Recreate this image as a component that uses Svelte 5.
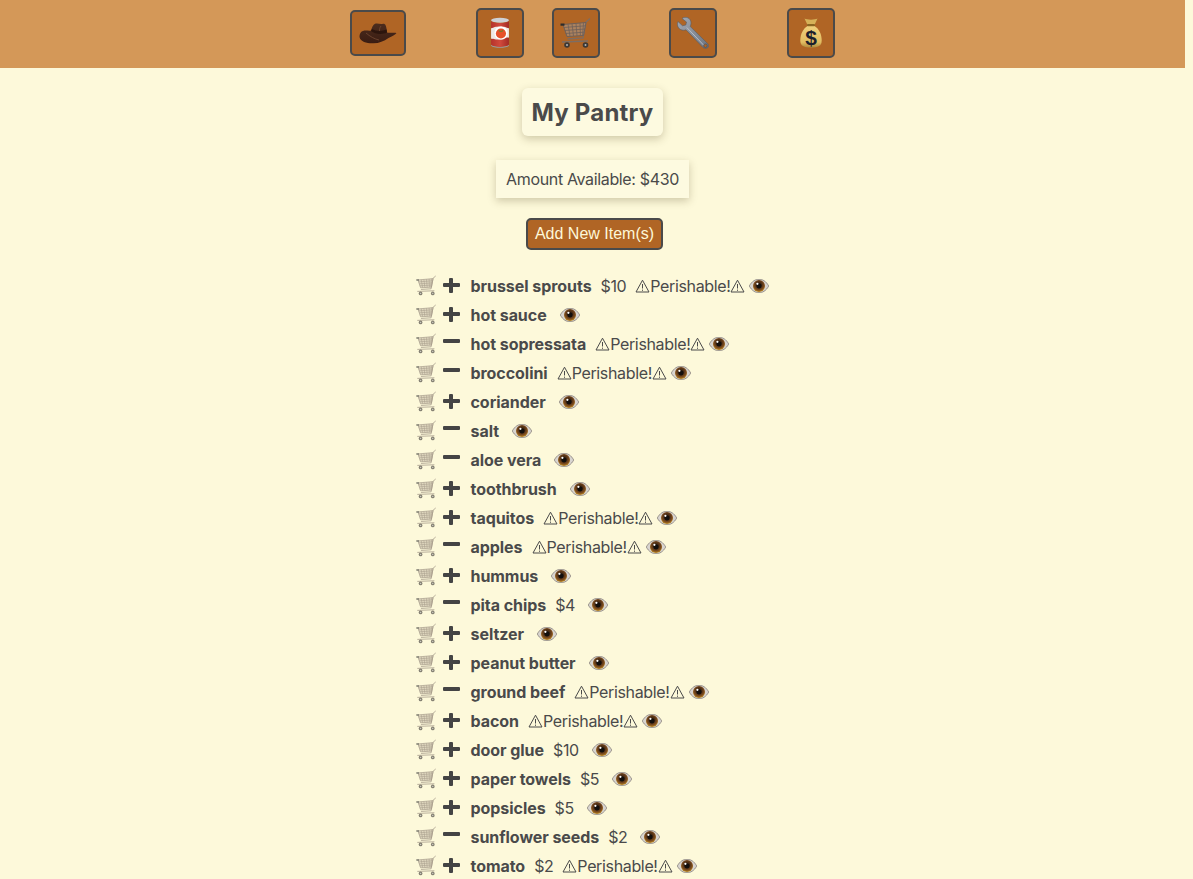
<script>
  const navItems = [
    { icon: 'hat', label: 'Profile', wide: true },
    { icon: 'can', label: 'Pantry' },
    { icon: 'cart', label: 'Shopping list' },
    { icon: 'wrench', label: 'Tools' },
    { icon: 'bag', label: 'Budget' }
  ];

  // inCart drives the plus / minus toggle
  const items = [
    { name: 'brussel sprouts', price: 10, perishable: true },
    { name: 'hot sauce' },
    { name: 'hot sopressata', inCart: true, perishable: true },
    { name: 'broccolini', inCart: true, perishable: true },
    { name: 'coriander' },
    { name: 'salt', inCart: true },
    { name: 'aloe vera', inCart: true },
    { name: 'toothbrush' },
    { name: 'taquitos', perishable: true },
    { name: 'apples', inCart: true, perishable: true },
    { name: 'hummus' },
    { name: 'pita chips', inCart: true, price: 4 },
    { name: 'seltzer' },
    { name: 'peanut butter' },
    { name: 'ground beef', inCart: true, perishable: true },
    { name: 'bacon', perishable: true },
    { name: 'door glue', price: 10 },
    { name: 'paper towels', price: 5 },
    { name: 'popsicles', price: 5 },
    { name: 'sunflower seeds', inCart: true, price: 2 },
    { name: 'tomato', price: 2, perishable: true }
  ];
</script>

{#snippet cartIcon()}
  <svg viewBox="0 0 32 32" class="icon-svg" aria-hidden="true">
    <path d="M30 1.500 L26 5 L23 21 L7.500 22" fill="none" stroke="#7c6d64" stroke-width="1.300" />
    <path d="M3 7.500 L26 5.500 L23.500 18.500 L7 19.500 Z" fill="#a99a8e" fill-opacity="0.55" stroke="#6f6058" stroke-width="1" />
    <path d="M3.800 10.500 L25.400 8.800 M4.700 13.500 L24.800 12 M5.600 16.500 L24.200 15.200 M8 7.200 L10 19.200 M12 6.800 L13.500 19 M16 6.500 L17 18.800 M20 6.100 L20.400 18.600 M23.500 5.800 L22.600 18.500" fill="none" stroke="#6f6058" stroke-width="0.800" />
    <path d="M2 25 L28 24" fill="none" stroke="#7c6d64" stroke-width="1.300" />
    <rect x="0.500" y="6.500" width="4" height="2.200" fill="#2c2c2c" />
    <circle cx="7" cy="28" r="2.800" fill="#3c3835" /><circle cx="7" cy="28" r="1" fill="#b5b5b5" />
    <circle cx="25.500" cy="28" r="2.800" fill="#3c3835" /><circle cx="25.500" cy="28" r="1" fill="#b5b5b5" />
  </svg>
{/snippet}

{#snippet hatIcon()}
  <svg viewBox="0 0 38 21" class="hat" aria-hidden="true">
    <path d="M0.500 14 C0.500 9.500 3 7.500 6.500 7.500 C9 7.500 10.500 8 12 7.500 C13 4.500 14 1.500 16 0.800 C19 0 21 1.500 24 0.800 C26.500 0.500 27 3 27.500 5.500 L28 9.500 C31 10.500 34.500 9 37.500 10 C36.500 12 33 13 29.500 15 C24.500 18.500 19 20.800 13 20.300 C7.500 20 1.500 19 0.500 14 Z" fill="url(#hat-felt)" />
    <path d="M12 8 C16 11 23 12 28 9.500 L27.600 6.500 C23 8.500 17 8.500 13 6 Z" fill="#2c150d" />
    <path d="M7 10 C11 13.500 15.500 16 20 17 M22 3 C20.500 5 20.500 6.500 20.500 8" fill="none" stroke="#734a33" stroke-width="0.800" />
  </svg>
{/snippet}

{#snippet canIcon()}
  <svg viewBox="0 0 24 34" class="icon-svg" aria-hidden="true">
    <ellipse cx="12" cy="3.500" rx="9.500" ry="2.600" fill="#ced1d5" />
    <path d="M2.500 4.500 C5 7 19 7 21.500 4.500 L21.500 29.500 C19 32.500 5 32.500 2.500 29.500 Z" fill="url(#can-red)" />
    <path d="M2.500 12 C6 11 7 10 12 10 C17 10 18 11 21.500 12 L21.500 22 C18 21 17 24 12 24 C7 24 6 23 2.500 23 Z" fill="#eeeae4" />
    <circle cx="13" cy="17" r="7" fill="#fff" />
    <circle cx="13" cy="17.500" r="5.400" fill="#e6522a" />
    <path d="M10 13.500 L13 14.800 L16 13.500 L14.500 15.800 L11.500 15.800 Z" fill="#5d8a2f" />
    <path d="M2.500 29.500 C5 32.500 19 32.500 21.500 29.500 L21.500 30.500 C19 33.500 5 33.500 2.500 30.500 Z" fill="#9a9ca0" />
  </svg>
{/snippet}

{#snippet wrenchIcon()}
  <svg viewBox="0 0 32 32" class="icon-svg" aria-hidden="true">
    <path d="M11 0.800 C8.500 0 6.500 0.300 5 1.500 L9.500 5 L8.800 8 L5.500 8.800 L1 4.500 C-0.500 7.500 0.800 11 3.500 12.500 C5.500 13.500 7.500 13.500 9 12.800 L26 30.500 C28 32 31 31.500 31.500 29.500 C32 28 31 27 30 26 L13.200 9.500 C14.800 6 14 2.500 11 0.800 Z" fill="url(#steel)" stroke="#565c66" stroke-width="0.600" />
    <path d="M9.800 10.500 L27 28.500" stroke="#b9bec6" stroke-width="1" fill="none" />
    <circle cx="28.500" cy="28.700" r="1.800" fill="#b06525" stroke="#4f545d" stroke-width="0.800" />
  </svg>
{/snippet}

{#snippet bagIcon()}
  <svg viewBox="0 0 22 30" class="bag" aria-hidden="true">
    <path d="M4.500 0.500 C7 2 15 2 17.500 0.500 L14.500 7 L7.500 7 Z" fill="#d6b158" />
    <path d="M7.500 8 C3 11 0.300 16 0.300 22.500 C0.300 28 4 29.500 11 29.500 C18 29.500 21.700 28 21.700 22.500 C21.700 16 19 11 14.500 8 Z" fill="url(#bag-cloth)" />
    <rect x="7" y="6" width="8" height="2.300" rx="1" fill="#8a6622" />
    <text x="11" y="26.500" text-anchor="middle" class="dollar">$</text>
  </svg>
{/snippet}

{#snippet eyeIcon()}
  <svg viewBox="0 0 20 14" class="eye" aria-hidden="true">
    <path d="M0.300 7 C3 2 6.500 0.300 10 0.300 C13.500 0.300 17 2 19.700 7 C17 12 13.500 13.700 10 13.700 C6.500 13.700 3 12 0.300 7 Z" fill="#d9d5d0" stroke="#7a736e" stroke-width="0.700" />
    <circle cx="10" cy="7" r="6" fill="url(#iris)" />
    <circle cx="10" cy="6.800" r="2.600" fill="#120e0c" />
    <circle cx="8.400" cy="4.800" r="1.100" fill="#fff" />
  </svg>
{/snippet}

{#snippet warnIcon()}
  <svg viewBox="0 0 15 14" class="warn" aria-hidden="true">
    <path d="M7.500 1.200 L14 13 L1 13 Z" fill="none" stroke="#4a4a4a" stroke-width="1" stroke-linejoin="round" />
    <path d="M7.500 5 L7.500 9.500 M7.500 10.600 L7.500 11.800" stroke="#4a4a4a" stroke-width="1" />
  </svg>
{/snippet}

<!-- shared gradients for the emoji-style icons -->
<svg class="defs" aria-hidden="true">
  <defs>
    <linearGradient id="hat-felt" x1="0" y1="0" x2="0" y2="1">
      <stop offset="0" stop-color="#4b2c1d" /><stop offset="1" stop-color="#3a1c12" />
    </linearGradient>
    <linearGradient id="can-red" x1="0" y1="0" x2="1" y2="0">
      <stop offset="0" stop-color="#b5332b" /><stop offset="0.500" stop-color="#d14a3c" /><stop offset="1" stop-color="#a32b25" />
    </linearGradient>
    <linearGradient id="steel" x1="0" y1="0" x2="1" y2="1">
      <stop offset="0" stop-color="#a4aab4" /><stop offset="1" stop-color="#6c7480" />
    </linearGradient>
    <linearGradient id="bag-cloth" x1="0" y1="0" x2="0" y2="1">
      <stop offset="0" stop-color="#efd07c" /><stop offset="0.750" stop-color="#e2bd62" /><stop offset="1" stop-color="#b08a3c" />
    </linearGradient>
    <radialGradient id="iris" cx="0.500" cy="0.400" r="0.620">
      <stop offset="0.350" stop-color="#4a2c14" /><stop offset="0.700" stop-color="#7d4c1f" /><stop offset="1" stop-color="#c8941f" />
    </radialGradient>
  </defs>
</svg>

<div class="page">
  <nav class="topbar">
    {#each navItems as nav}
      <button class="nav-btn" class:wide={nav.wide} aria-label={nav.label}>
        {#if nav.icon === 'hat'}{@render hatIcon()}
        {:else if nav.icon === 'can'}{@render canIcon()}
        {:else if nav.icon === 'cart'}{@render cartIcon()}
        {:else if nav.icon === 'wrench'}{@render wrenchIcon()}
        {:else}{@render bagIcon()}{/if}
      </button>
    {/each}
  </nav>

  <main class="content">
    <h1 class="title">My Pantry</h1>
    <p class="funds">Amount Available: $430</p>
    <button class="add-btn">Add New Item(s)</button>

    <ul class="list">
      {#each items as item}
        <li class="row">
          <span class="cart">{@render cartIcon()}</span>
          <span class="toggle" class:minus={item.inCart}></span>
          <strong class="name">{item.name}</strong>
          {#if item.price}<span class="tail">${item.price}</span>{/if}
          {#if item.perishable}
            <span class="perish">{@render warnIcon()}Perishable!{@render warnIcon()}</span>
          {/if}
          <span class="see">{@render eyeIcon()}</span>
        </li>
      {/each}
    </ul>
  </main>
</div>

<style>
  :global(body) {
    background: #fdf9da;
    overflow: hidden;
  }

  .defs {
    position: absolute;
    width: 0;
    height: 0;
  }

  .page {
    width: 1185px;
    font-family: Inter, 'Liberation Sans', sans-serif;
    color: #4a4a4a;
  }

  .topbar {
    height: 68px;
    background: #d49858;
    display: flex;
    align-items: flex-start;
    justify-content: center;
    padding-top: 8px;
    box-sizing: border-box;
  }

  .nav-btn {
    width: 48px;
    height: 50px;
    padding: 0;
    margin-left: 69px;
    background: #b06525;
    border: 2px solid #4a4a4a;
    border-radius: 5px;
    box-sizing: border-box;
    display: flex;
    align-items: center;
    justify-content: center;
  }

  .nav-btn:nth-child(3) {
    margin-left: 28px;
  }

  .nav-btn:nth-child(5) {
    margin-left: 70px;
  }

  .nav-btn.wide {
    width: 56px;
    height: 46px;
    margin: 2px 1px 0 0;
  }

  .icon-svg {
    width: 32px;
    height: 32px;
    display: block;
  }

  .hat {
    width: 38px;
    height: 21px;
    display: block;
  }

  .bag {
    width: 22px;
    height: 30px;
    display: block;
  }

  .dollar {
    font: 700 21px 'Liberation Sans', sans-serif;
    fill: #1b1f2c;
  }

  .content {
    display: flex;
    flex-direction: column;
    align-items: center;
  }

  .title {
    margin: 20px 0 0;
    padding: 0 9.500px;
    height: 48px;
    line-height: 50px;
    font-size: 24px;
    font-weight: 700;
    letter-spacing: 0.200px;
    background: #fdfae0;
    border-radius: 6px;
    box-shadow: 0 3px 8px rgba(70, 60, 20, 0.25);
  }

  .funds {
    margin: 24px 0 0;
    padding: 0 10px;
    height: 38px;
    line-height: 38px;
    font-size: 16px;
    letter-spacing: -0.350px;
    background: #fdfae0;
    box-shadow: 0 3px 8px rgba(70, 60, 20, 0.25);
  }

  .add-btn {
    margin: 20px 0 0 4px;
    width: 137px;
    height: 32px;
    padding: 0;
    font: 16px 'Liberation Sans', sans-serif;
    color: #fdf8d9;
    background: #b06525;
    border: 2px solid #4a4a4a;
    border-radius: 5px;
  }

  .list {
    list-style: none;
    margin: 21px 0 0;
    padding: 0;
  }

  .row {
    display: flex;
    align-items: center;
    height: 29px;
    font-size: 16px;
    white-space: nowrap;
  }

  .cart {
    width: 21px;
    height: 21px;
    opacity: 0.62;
  }

  .cart .icon-svg {
    width: 21px;
    height: 21px;
  }

  .toggle {
    position: relative;
    width: 17px;
    height: 15px;
    margin: -1px 11px 0 6px;
  }

  .toggle::before {
    content: '';
    position: absolute;
    left: 0;
    right: 0;
    top: 5.500px;
    height: 4px;
    background: #444;
    border-radius: 1px;
  }

  .toggle.minus::before {
    top: 3px;
  }

  .toggle:not(.minus)::after {
    content: '';
    position: absolute;
    top: 0;
    bottom: 0;
    left: 6.500px;
    width: 4px;
    background: #444;
    border-radius: 1px;
  }

  .name {
    font-weight: 700;
    letter-spacing: -0.050px;
    margin-right: 9px;
  }

  .tail {
    margin-right: 9px;
    letter-spacing: -0.400px;
  }

  .perish {
    display: flex;
    align-items: center;
    letter-spacing: -0.350px;
  }

  .warn {
    width: 15px;
    height: 14px;
  }

  .see {
    margin-left: 4px;
    height: 14px;
  }

  .eye {
    display: block;
    width: 20px;
    height: 14px;
  }
</style>
